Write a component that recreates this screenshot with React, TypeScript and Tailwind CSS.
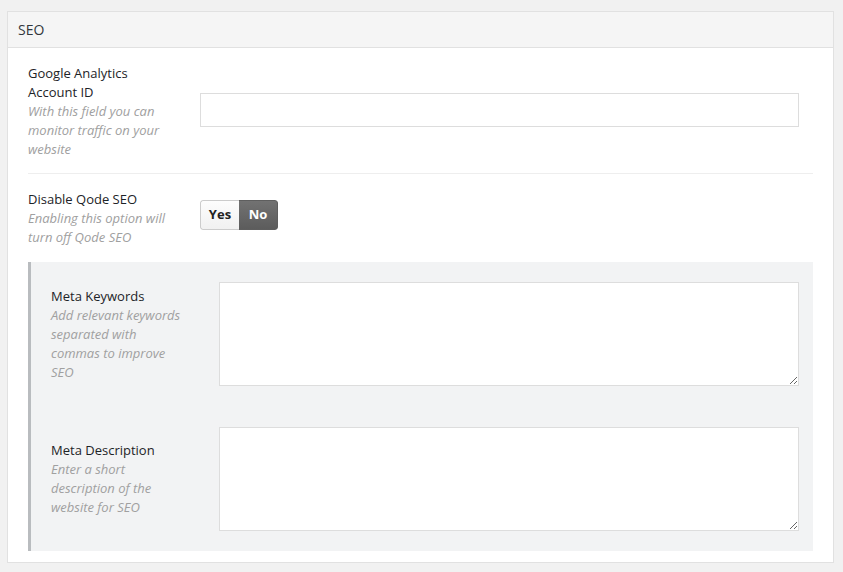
import { useState } from 'react'

const font = { fontFamily: '"Open Sans", "Noto Sans", Arial, sans-serif' }

function Label({ title, desc, width }: { title: string[]; desc: string[]; width: string }) {
  return (
    <div className={`${width} shrink-0 text-[13px] leading-[19px]`}>
      {title.map((t) => (
        <div key={t} className="font-medium text-[#1d2327]">
          {t}
        </div>
      ))}
      {desc.map((d) => (
        <div key={d} className="italic text-[#a0a0a0]">
          {d}
        </div>
      ))}
    </div>
  )
}

export default function App() {
  const [seoOff, setSeoOff] = useState(false)

  return (
    <div className="min-h-[572px] bg-[#f1f1f1] pt-[11px] pl-[7px]" style={font}>
      <div className="w-[827px] border border-[#e1e1e1] bg-white">
        <div className="flex h-[36px] items-center border-b border-[#e1e1e1] bg-[#f5f5f5] pl-[10px] text-[14px] text-[#32373c]">
          SEO
        </div>

        <div className="px-[20px] pt-[16px] pb-[11px]">
          {/* analytics */}
          <div className="flex items-center border-b border-[#eeeeee] pb-[14px]">
            <Label
              width="w-[172px]"
              title={['Google Analytics', 'Account ID']}
              desc={['With this field you can', 'monitor traffic on your', 'website']}
            />
            <input
              type="text"
              className="mr-[14px] mt-[-3px] h-[34px] flex-1 border border-[#dddddd] bg-white px-2 text-[13px] outline-none"
            />
          </div>

          {/* disable seo */}
          <div className="flex items-start pt-[16px] pb-[15px]">
            <Label
              width="w-[172px]"
              title={['Disable Qode SEO']}
              desc={['Enabling this option will', 'turn off Qode SEO']}
            />
            <div className="mt-[10px] flex h-[30px] overflow-hidden rounded-[3px] text-[13px] font-bold">
              <button
                onClick={() => setSeoOff(true)}
                className={`w-[39px] border border-r-0 ${
                  seoOff
                    ? 'border-[#5e5e5e] bg-gradient-to-b from-[#727272] to-[#5c5c5c] text-white'
                    : 'border-[#cccccc] bg-gradient-to-b from-[#fdfdfd] to-[#f1f1f1] text-[#222]'
                } rounded-l-[3px]`}
              >
                Yes
              </button>
              <button
                onClick={() => setSeoOff(false)}
                className={`w-[39px] border border-l-0 ${
                  !seoOff
                    ? 'border-[#5e5e5e] bg-gradient-to-b from-[#727272] to-[#5c5c5c] text-white'
                    : 'border-[#cccccc] bg-gradient-to-b from-[#fdfdfd] to-[#f1f1f1] text-[#222]'
                } rounded-r-[3px]`}
              >
                No
              </button>
            </div>
          </div>

          {/* meta fields */}
          <div className="flex flex-col gap-[41px] border-l-[3px] border-[#b9bcbf] bg-[#f2f3f4] py-[20px] pl-[20px] pr-[14px]">
            <div className="flex items-center">
              <Label
                width="w-[168px]"
                title={['Meta Keywords']}
                desc={['Add relevant keywords', 'separated with', 'commas to improve', 'SEO']}
              />
              <textarea className="h-[104px] flex-1 border border-[#dddddd] bg-white p-2 text-[13px] outline-none" />
            </div>
            <div className="flex items-center">
              <Label
                width="w-[168px]"
                title={['Meta Description']}
                desc={['Enter a short', 'description of the', 'website for SEO']}
              />
              <textarea className="h-[104px] flex-1 border border-[#dddddd] bg-white p-2 text-[13px] outline-none" />
            </div>
          </div>
        </div>
      </div>
    </div>
  )
}
